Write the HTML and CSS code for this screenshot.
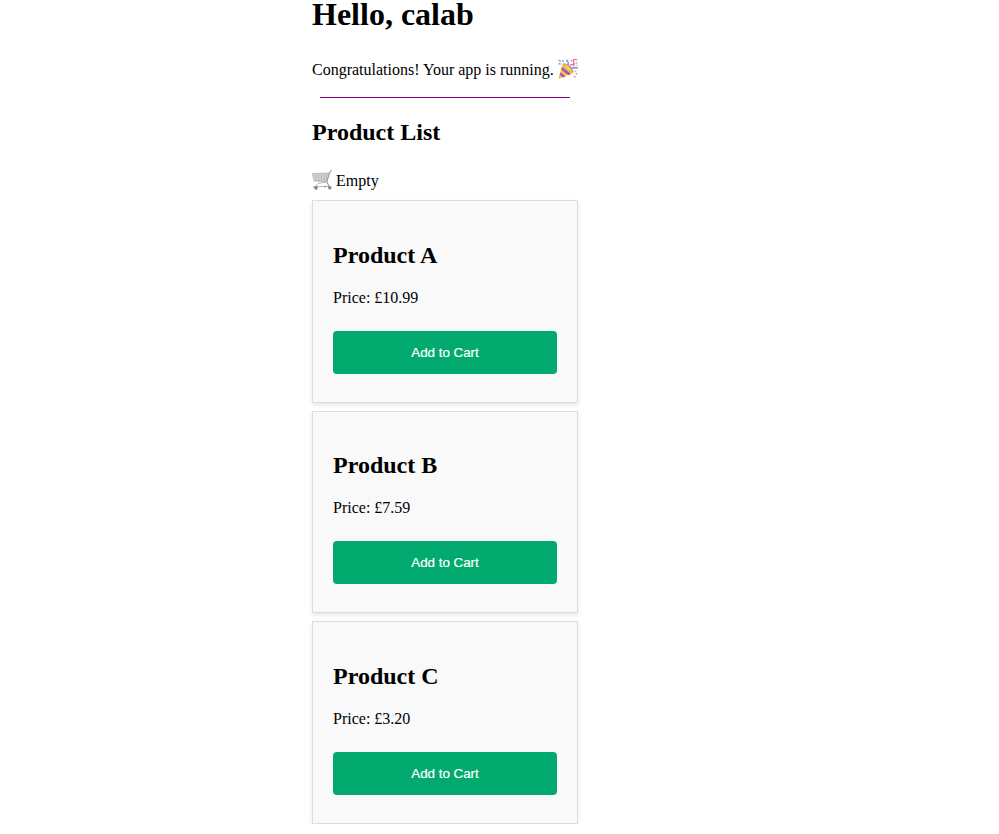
FILE: index.html
```html
<!DOCTYPE html>
<html lang="en">
<head>
<meta charset="utf-8">
<title>Product List</title>
<link rel="stylesheet" href="styles.css">
</head>
<body>
<main class="app">
  <h1 class="greeting">Hello, calab</h1>
  <p class="intro">
    <span>Congratulations! Your app is running.</span>
    <svg class="emoji" viewBox="0 0 20 20" aria-hidden="true">
      <path d="M5 4.500 15.500 13.500 1.500 19.500Q.2 20 .6 18.500Z" fill="#f5bf48"/>
      <path d="m4 8 9 7-2.500 1.200-7.300-5.700ZM2.500 13.500l5 4-2.200 1-3.500-2.500Z" fill="#9a56bd"/>
      <path d="M5 4.500C8 3 17 11 15.500 13.500 13 15.500 4 7 5 4.500Z" fill="#e9a83c"/>
      <path d="M6.500 6C8.500 5.500 14 10.500 14 12.500 11.500 12.500 7 8.500 6.500 6Z" fill="#ffd85c"/>
      <path d="M9.500 7Q11.500 4 8.500 .8M12 9.500q3-1.500 8-.5" fill="none" stroke="#6d9ded" stroke-width="1.600"/>
      <path d="M11.500 8q1-3 3-2.500T15.500 2.500 19 1" fill="none" stroke="#e86b84" stroke-width="1.300"/>
      <path d="M.5 1 3 2.500M.5 5l2-.5M4.500 1l1 2" stroke="#6d9ded" stroke-width="1.300"/>
      <path d="m17.500 4.500 2-1M15 6.500l2-.6M18 14l1 1.500M16 17l1.500 1.500M13 1l.5 1.500" stroke="#ee8295" stroke-width="1.300"/>
      <path d="M18 6l1.500.5M16.500 12l2 1M3 5.500l1-.7" stroke="#e9b65c" stroke-width="1.200"/>
    </svg>
  </p>
  <hr class="divider">
  <h2 class="title">Product List</h2>
  <div class="cart">
    <svg class="emoji" viewBox="0 0 20 20" aria-hidden="true">
      <path d="M.3 3.500 17.500 3 15 12 2 11Z" fill="#d2d2d2"/>
      <path d="M.3 3.500 17.500 3M2 11l12.800.8M.3 3.500 2 11M3.500 4 4.500 11M6.500 4 7.200 11M9.500 4v7M12.300 4 12 11M15 4 13.800 11" fill="none" stroke="#a8a8a8" stroke-width=".65"/>
      <path d="M19.800.5 18 1.500 14.800 12 17 16.300" fill="none" stroke="#8d8d8d" stroke-width="1"/>
      <path d="M14.800 12 6 13.500 3.500 16.500H17" fill="none" stroke="#b0b0b0" stroke-width=".9"/>
      <g fill="#786f70"><circle cx="4" cy="18" r="1.700"/><circle cx="17.800" cy="17.700" r="1.700"/><circle cx="2" cy="17" r=".8"/><circle cx="13" cy="16.600" r=".8"/></g>
      <g fill="#c9c4c5"><circle cx="4" cy="18" r=".6"/><circle cx="17.800" cy="17.700" r=".6"/></g>
    </svg>
    <span>Empty</span>
  </div>
  <section class="products">
    <article class="card">
      <h2 class="name">Product A</h2>
      <p class="price">Price: £10.99</p>
      <button class="add" type="button">Add to Cart</button>
    </article>
    <article class="card">
      <h2 class="name">Product B</h2>
      <p class="price">Price: £7.59</p>
      <button class="add" type="button">Add to Cart</button>
    </article>
    <article class="card">
      <h2 class="name">Product C</h2>
      <p class="price">Price: £3.20</p>
      <button class="add" type="button">Add to Cart</button>
    </article>
  </section>
</main>
</body>
</html>
```
FILE: styles.css
```css
* { box-sizing: border-box; }

body {
  margin: 0;
  background: #fff;
  color: #000;
  font: 16px/18px "Liberation Serif", "Times New Roman", serif;
}

.app {
  display: flow-root;
  width: 266px;
  margin-left: 312px;
}

.greeting {
  margin: 0 0 32px;
  font-size: 32px;
  line-height: 29px;
}

.intro,
.cart {
  display: flex;
  gap: 4px;
  height: 18px;
  margin: 0;
  white-space: nowrap;
}

.intro { justify-content: space-between; }

.emoji {
  flex: none;
  width: 20px;
  height: 20px;
  margin-top: -2px;
}

.divider {
  height: 1px;
  margin: 18px 8px 20px;
  border: 0;
  background: #800080;
}

.title {
  margin: 0 0 26px;
  font-size: 24px;
  line-height: 28px;
}

.products {
  display: flex;
  flex-direction: column;
  gap: 8px;
  margin-top: 10.4px;
}

.card {
  height: 202.5px;
  padding: 39.5px 20px 20px;
  border: 1px solid #ddd;
  background: #f9f9f9;
  box-shadow: 0 2px 4px rgba(0, 0, 0, 0.1);
}

.name {
  margin: 0 0 20px;
  font-size: 24px;
  line-height: 28px;
}

.price { margin: 0 0 24px; }

.add {
  display: block;
  width: 100%;
  height: 43px;
  padding: 0;
  border: 0;
  border-radius: 4px;
  background: #02aa70;
  color: #fff;
  font: 13.333px "Liberation Sans", Arial, sans-serif;
  -webkit-text-stroke: 0.2px #fff;
}
```
